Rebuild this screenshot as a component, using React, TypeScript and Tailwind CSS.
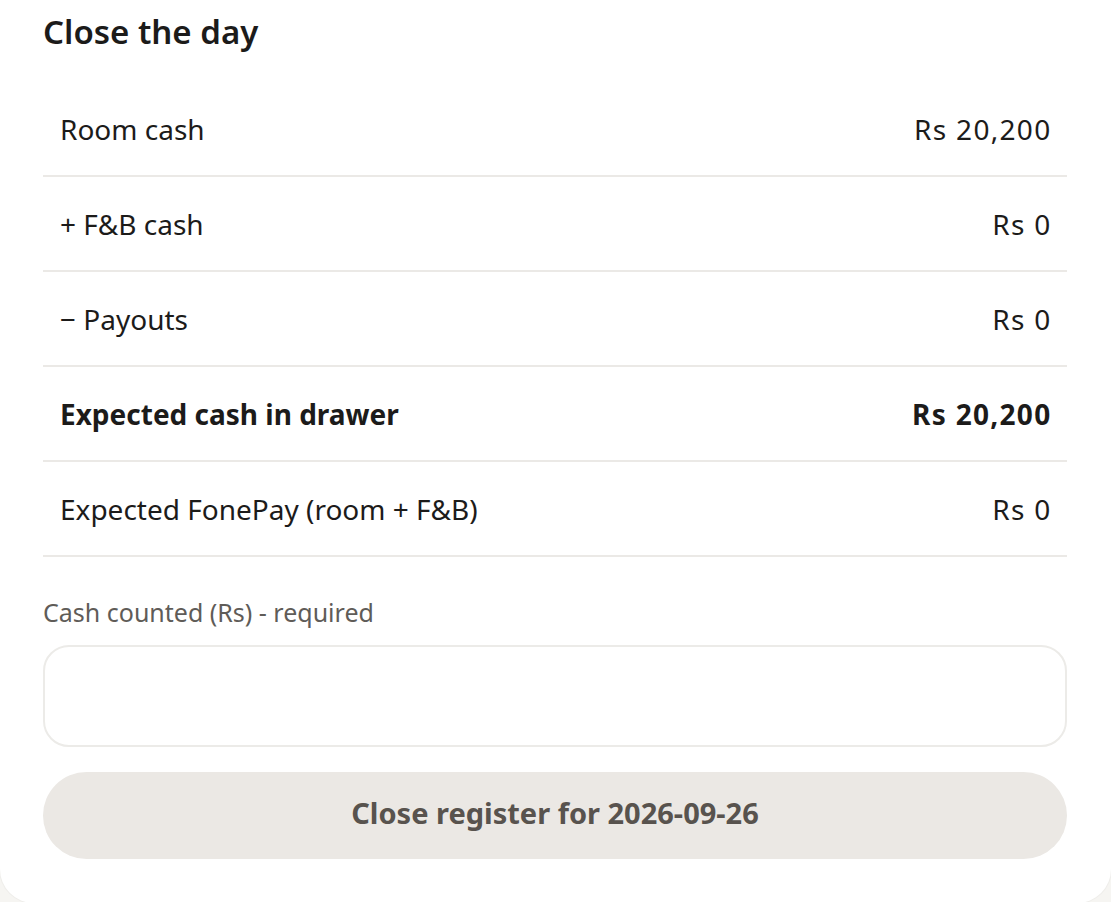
import { useState } from "react";

const rows = [
  { label: "Room cash", value: "Rs 20,200" },
  { label: "+ F&B cash", value: "Rs 0" },
  { label: "\u2212 Payouts", value: "Rs 0" },
  { label: "Expected cash in drawer", value: "Rs 20,200", bold: true },
  { label: "Expected FonePay (room + F&B)", value: "Rs 0" },
];

export default function App() {
  const [counted, setCounted] = useState("");

  return (
    <div className="min-h-screen bg-[#f6f5f2] font-['Noto_Sans',sans-serif] text-[#1c1b1a]">
      <div className="bg-white rounded-b-[34px] pl-[43px] pr-[44px] pt-[9px] pb-[44px] shadow-[0_0_0_1px_#efeeeb]">
        <h2 className="text-[33px] font-semibold leading-[46px]">Close the day</h2>

        <div className="mt-[27px]">
          {rows.map((row) => (
            <div
              key={row.label}
              className="flex items-center justify-between px-[17px] h-[95px] border-b-2 border-[#ebe9e6]"
            >
              <span className={row.bold ? "text-[28px] font-bold" : "text-[28px]"}>{row.label}</span>
              <span
                className={
                  row.bold
                    ? "text-[28px] font-bold tracking-[1.3px] -mr-[1.5px]"
                    : "text-[28px] tracking-[1.3px] -mr-[1.5px]"
                }
              >
                {row.value}
              </span>
            </div>
          ))}
        </div>

        <label className="block mt-[37px] text-[25px] text-[#5f5c58]">Cash counted (Rs) - required</label>
        <input
          className="mt-[13px] block w-full h-[102px] rounded-[26px] border-2 border-[#ecebe8] px-5 text-[28px] outline-none"
          value={counted}
          onChange={(e) => setCounted(e.target.value)}
        />

        <button
          type="button"
          className="mt-[25px] w-full h-[87px] rounded-full bg-[#ebe8e4] text-[29px] font-bold text-[#58534e] leading-[40px] pb-[4px]"
        >
          Close register for 2026-09-26
        </button>
      </div>
    </div>
  );
}
